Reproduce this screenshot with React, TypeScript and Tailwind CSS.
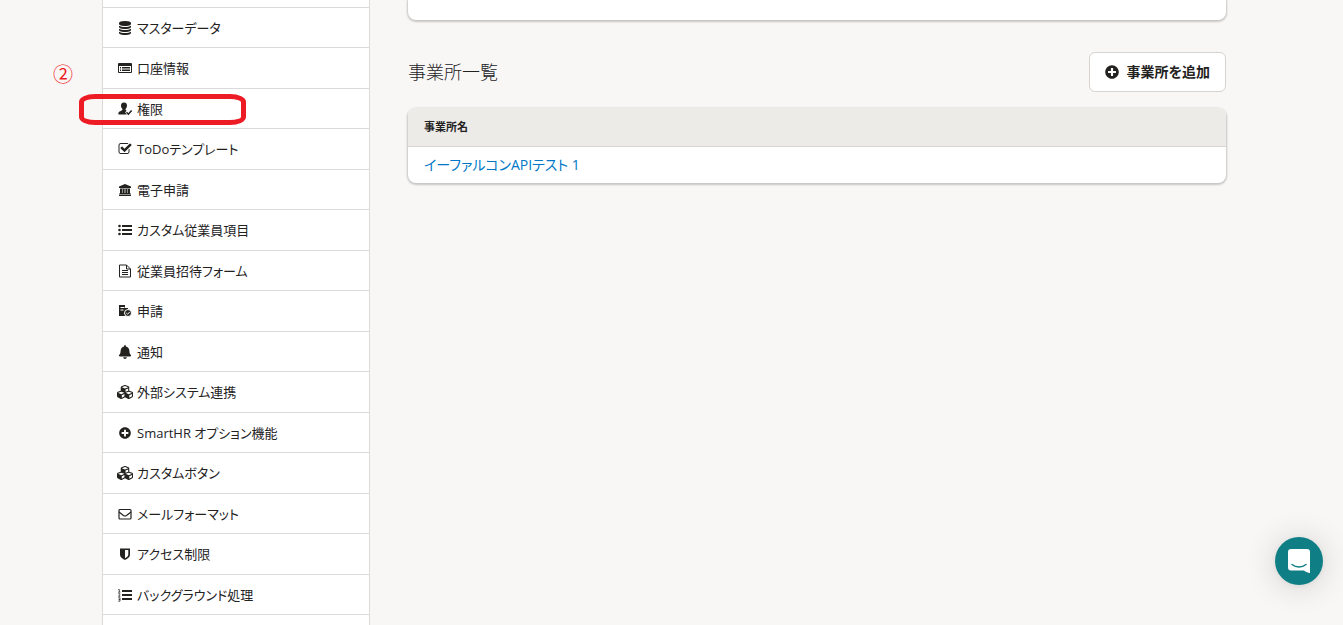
import React from 'react';
import { FaBell, FaCubes, FaPlusCircle } from 'react-icons/fa';
import clsx from 'clsx';

interface MenuItem {
    label: string;
    icon: React.ReactNode;
    marked?: boolean;
}

const Icon = ({ children }: { children: React.ReactNode }) => (
    <svg width="14" height="14" viewBox="0 0 14 14" fill="currentColor" aria-hidden="true">
        {children}
    </svg>
);

const DatabaseIcon = () => (
    <svg width="14" height="14" viewBox="0 0 1792 1792" fill="currentColor" aria-hidden="true">
        <path d="M896 768q237 0 443-43t325-127v170q0 69-103 128t-280 93.5-385 34.5-385-34.5-280-93.5-103-128v-170q119 84 325 127t443 43zm0 768q237 0 443-43t325-127v170q0 69-103 128t-280 93.5-385 34.5-385-34.5-280-93.5-103-128v-170q119 84 325 127t443 43zm0-384q237 0 443-43t325-127v170q0 69-103 128t-280 93.5-385 34.5-385-34.5-280-93.5-103-128v-170q119 84 325 127t443 43zm0-1152q208 0 385 34.5t280 93.5 103 128v128q0 69-103 128t-280 93.5-385 34.5-385-34.5-280-93.5-103-128v-128q0-69 103-128t280-93.5 385-34.5z" />
    </svg>
);

const CardListIcon = () => (
    <Icon>
        <path fillRule="evenodd" d="M1 2h12a1 1 0 0 1 1 1v8a1 1 0 0 1-1 1H1a1 1 0 0 1-1-1V3a1 1 0 0 1 1-1zm0 3v6h12V5z" />
        <path d="M2 6h1v1H2zM4 6h8v1H4zM2 7.500h1v1H2zM4 7.500h8v1H4zM2 9h1v1H2zM4 9h8v1H4z" />
    </Icon>
);

const UserCheckIcon = () => (
    <Icon>
        <path d="M6 0.500c1.900 0 3 1.300 3 3.100 0 1.400-.6 2.600-1.400 3.300v1.200l1 .5-1.400 1.900 1.600 2H.8c-.4 0-.6-.3-.5-.7.2-1.600.8-2.200 2-2.600L4.400 8V6.900C3.600 6.200 3 5 3 3.600 3 1.800 4.100.5 6 .5z" />
        <path d="M8.500 10.300l1.900 1.900 3.200-3.700" fill="none" stroke="currentColor" strokeWidth="1.500" />
    </Icon>
);

const CheckSquareIcon = () => (
    <svg width="14" height="14" viewBox="0 0 1792 1792" fill="currentColor" aria-hidden="true">
        <path d="M1472 930v318q0 119-84.5 203.5t-203.5 84.5h-832q-119 0-203.5-84.5t-84.5-203.5v-832q0-119 84.5-203.5t203.5-84.5h832q63 0 117 25 15 7 18 23 3 17-9 29l-49 49q-10 10-23 10-3 0-9-2-23-6-45-6h-832q-66 0-113 47t-47 113v832q0 66 47 113t113 47h832q66 0 113-47t47-113v-254q0-13 9-22l64-64q10-10 23-10 6 0 12 3 20 8 20 29zm231-489l-814 814q-24 24-57 24t-57-24l-430-430q-24-24-24-57t24-57l110-110q24-24 57-24t57 24l263 263 647-647q24-24 57-24t57 24l110 110q24 24 24 57t-24 57z" />
    </svg>
);

const BankIcon = () => (
    <Icon>
        <path d="M7 1l6 2.500V5H1V3.500zM2 5.500h2v5H2zM5 5.500h1.500v5H5zM7.500 5.500H9v5H7.500zM10 5.500h2v5h-2zM1.500 10h11v1h-11zM1 11.500h12V13H1z" />
        <path d="M4 5h1v5.500H4zM6.500 5h1v5.500h-1zM9 5h1v5.500H9z" opacity=".5" />
    </Icon>
);

const ListIcon = () => (
    <Icon>
        <path d="M4 2h10v2H4zM4 6h10v2H4zM4 10h10v2H4z" />
        <circle cx="1.500" cy="3" r="1.300" />
        <circle cx="1.500" cy="7" r="1.300" />
        <circle cx="1.500" cy="11" r="1.300" />
    </Icon>
);

const FileIcon = () => (
    <Icon>
        <path d="M1.500 1h7l4 4v8h-11zM8.500 1v4h4" fill="none" stroke="currentColor" strokeWidth="1" />
        <path d="M4 6h6v1H4zM4 8h6v1H4zM4 10h6v1H4z" />
    </Icon>
);

const RequestIcon = () => (
    <Icon>
        <path d="M1 1h6v3h3v8H1z" />
        <path d="M2.500 3.500h4M2.500 6h3" stroke="#fff" strokeWidth="1" />
        <circle cx="10" cy="9" r="3.500" stroke="#fff" strokeWidth="1" />
        <path d="M8.300 9l1.300 1.200 2.200-2.300" fill="none" stroke="#fff" strokeWidth="1" />
    </Icon>
);

const MailIcon = () => (
    <Icon>
        <rect x="1" y="2.500" width="12" height="9.500" rx="1" fill="none" stroke="currentColor" strokeWidth="1.200" />
        <path d="M1 5l4.500 3.500q1.500 1 3 0L13 5" fill="none" stroke="currentColor" strokeWidth="1.200" />
    </Icon>
);

const ShieldIcon = () => (
    <Icon>
        <path fillRule="evenodd" d="M2 1.500h10v6c0 3-3 4.500-5 5.500-2-1-5-2.500-5-5.500zM7 3v8.300c1.500-.8 3.300-2 3.300-3.800V3z" />
    </Icon>
);

const NumberedListIcon = () => (
    <Icon>
        <path d="M4 2h10v2H4zM4 6h10v2H4zM4 10h10v2H4z" />
        <path d="M.3 1.500h1V4M.2 4.200h2.200M.3 5.700h1.500v1.200L.4 8.300h2M.3 9.800h1.700v3.400H.3M.6 11.500H2" fill="none" stroke="currentColor" strokeWidth=".8" />
    </Icon>
);

const menuItems: MenuItem[] = [
    { label: 'マスターデータ', icon: <DatabaseIcon /> },
    { label: '口座情報', icon: <CardListIcon /> },
    { label: '権限', icon: <UserCheckIcon />, marked: true },
    { label: 'ToDoテンプレート', icon: <CheckSquareIcon /> },
    { label: '電子申請', icon: <BankIcon /> },
    { label: 'カスタム従業員項目', icon: <ListIcon /> },
    { label: '従業員招待フォーム', icon: <FileIcon /> },
    { label: '申請', icon: <RequestIcon /> },
    { label: '通知', icon: <FaBell size={14} /> },
    { label: '外部システム連携', icon: <FaCubes size={16} /> },
    { label: 'SmartHR オプション機能', icon: <FaPlusCircle size={12} /> },
    { label: 'カスタムボタン', icon: <FaCubes size={16} /> },
    { label: 'メールフォーマット', icon: <MailIcon /> },
    { label: 'アクセス制限', icon: <ShieldIcon /> },
    { label: 'バックグラウンド処理', icon: <NumberedListIcon /> },
];

function Marker() {
    return (
        <>
            <span className="absolute right-full -top-7 mr-[30px] text-[20px] leading-7 text-[#ed1c24]">②</span>
            <span className="pointer-events-none absolute -left-6 top-[5px] h-[31px] w-[167px] rounded-[16px/8px] border-5 border-[#ed1c24]" />
        </>
    );
}

function Sidebar() {
    return (
        <nav className="min-h-screen w-[268px] shrink-0 border-x border-[#dadada] bg-white">
            <div className="h-2 border-b border-[#dadada]" />
            <ul>
                {menuItems.map((item) => (
                    <li key={item.label} className="relative h-10 border-b border-[#dadada] even:h-[41px]">
                        <a href="#" className="flex h-full items-center gap-1 pl-[14px] text-[13px] leading-5">
                            <span className="flex w-4 shrink-0 justify-center">{item.icon}</span>
                            {item.label}
                        </a>
                        {item.marked && <Marker />}
                    </li>
                ))}
            </ul>
        </nav>
    );
}

function OfficeTable() {
    return (
        <div className="mt-4 overflow-hidden rounded-lg bg-white shadow-[0_1px_2px_1px_rgba(3,3,2,0.2)]">
            <table className="w-full text-left">
                <thead>
                    <tr className="h-[38px] border-b border-[#d6d3d0] bg-[#edebe8]">
                        <th className="px-4 text-[11px] leading-4 font-bold">事業所名</th>
                    </tr>
                </thead>
                <tbody>
                    <tr className="h-[37px]">
                        <td className="px-4 text-[14px] leading-5">
                            <a href="#" className="text-[#0077c7]">イーファルコンAPIテスト 1</a>
                        </td>
                    </tr>
                </tbody>
            </table>
        </div>
    );
}

export default function App() {
    return (
        <div
            className={clsx(
                'flex min-h-screen bg-[#f8f7f6] pr-[117px] pl-[102px] text-[#23221e]',
                "font-['Open_Sans','Noto_Sans_CJK_JP',sans-serif] [font-feature-settings:'palt']"
            )}
        >
            <Sidebar />
            <main className="ml-[38px] flex-1">
                <div className="h-5 rounded-b-lg bg-white shadow-[0_1px_2px_1px_rgba(3,3,2,0.2)]" />
                <div className="mt-8 flex items-center justify-between">
                    <h2 className="text-[18px] leading-7 font-light">事業所一覧</h2>
                    <button
                        type="button"
                        className="flex h-10 items-center gap-2 rounded-md border border-[#d6d3d0] bg-white px-[15px] text-[14px] leading-5 font-bold"
                    >
                        <FaPlusCircle size={14} /> 事業所を追加
                    </button>
                </div>
                <OfficeTable />
            </main>

            {/* Chat launcher */}
            <button
                type="button"
                aria-label="チャットを開く"
                className="fixed right-5 bottom-10 flex size-12 items-center justify-center rounded-full bg-[#0f7f85] shadow-[0_1px_6px_rgba(0,0,0,0.06),0_2px_32px_rgba(0,0,0,0.16)]"
            >
                <svg width="22" height="24" viewBox="0 0 22 24" aria-hidden="true">
                    <path d="M3 0h16a3 3 0 0 1 3 3v21s-3.500-.5-6-2.500H3a3 3 0 0 1-3-3V3a3 3 0 0 1 3-3z" fill="#fff" />
                    <path d="M4 15.500c4 3.200 10 3.200 14 0" fill="none" stroke="#0f7f85" strokeWidth="1.500" strokeLinecap="round" />
                </svg>
            </button>
        </div>
    );
}
